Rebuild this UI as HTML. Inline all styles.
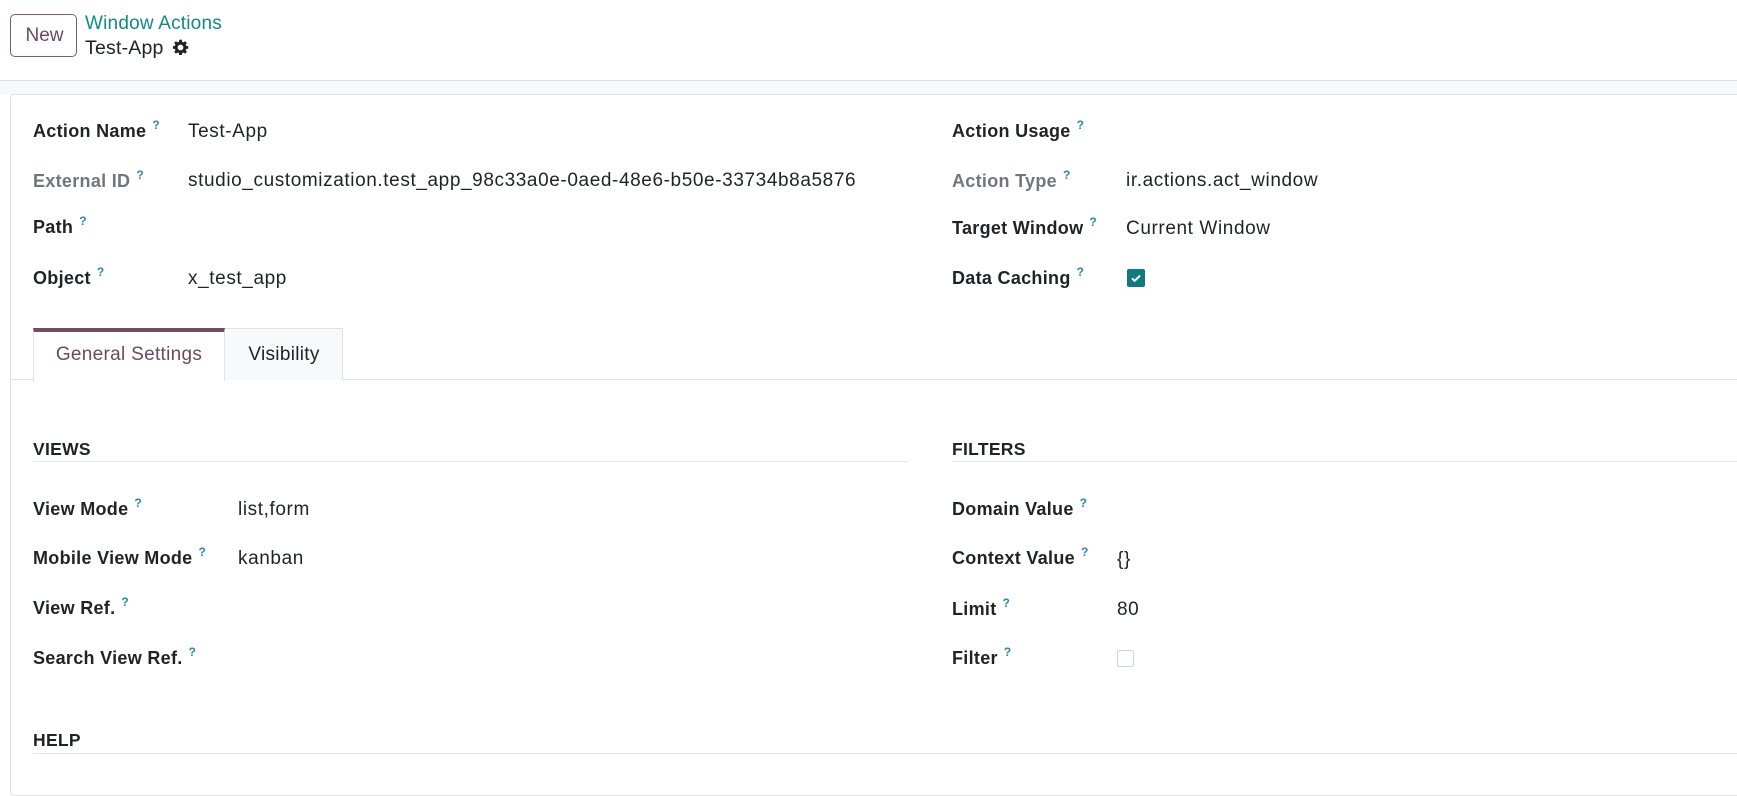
<!DOCTYPE html>
<html><head><meta charset="utf-8"><style>
body{margin:0;width:1737px;height:768px;overflow:hidden;background:#fff;font-family:"Liberation Sans",sans-serif;color:#1f2328;position:relative}
.a{position:absolute;white-space:nowrap;line-height:20px;font-size:19px;letter-spacing:0.6px}
.l,.g{font-weight:bold;font-size:18px;letter-spacing:0.3px}
.g{color:#707680}
.q{color:#2a8aa6;font-size:12px;position:relative;top:-8px;margin-left:6px;font-weight:bold}
.h{font-weight:bold;font-size:17.5px;letter-spacing:0.3px;color:#1f2328}
</style></head><body>
<div style="position:absolute;left:10px;top:14px;width:67px;height:43px;border:1.5px solid #7d5a6f;border-radius:5px;box-sizing:border-box"></div>
<div class="a" style="left:10px;top:26px;width:69px;text-align:center;color:#6b4a5f;font-size:19px;letter-spacing:0">New</div>
<div class="a" style="left:85px;top:14px;color:#128a87;font-size:19px;letter-spacing:0.2px">Window Actions</div>
<div class="a" style="left:85px;top:38px;font-size:19.5px;letter-spacing:0.2px">Test-App <svg width="17" height="17" viewBox="0 0 16 16" style="vertical-align:-2px;margin-left:3px"><path fill="#1f2328" d="M8 0.5l1.3.3.3 1.9 1.2.5 1.6-1.1 1.6 1.6-1.1 1.6.5 1.2 1.9.3v2.3l-1.9.3-.5 1.2 1.1 1.6-1.6 1.6-1.6-1.1-1.2.5-.3 1.9H6.8l-.3-1.9-1.2-.5-1.6 1.1-1.6-1.6 1.1-1.6-.5-1.2-1.9-.3V6.8l1.9-.3.5-1.2-1.1-1.6 1.6-1.6 1.6 1.1 1.2-.5.3-1.9zM8 5.3A2.7 2.7 0 1 0 8 10.7 2.7 2.7 0 1 0 8 5.3z"/></svg></div>
<div style="position:absolute;left:0;top:80px;width:1737px;height:14px;background:#f7f8f9;border-top:1.5px solid #dcdfe2"></div>
<div style="position:absolute;left:10px;top:94px;width:1740px;height:700px;border:1.5px solid #dee2e6;border-radius:4px;background:#fff"></div>

<div class="a l" style="left:33px;top:121px">Action Name<span class="q">?</span></div>
<div class="a" style="left:188px;top:122px">Test-App</div>
<div class="a g" style="left:33px;top:171px">External ID<span class="q">?</span></div>
<div class="a" style="left:188px;top:171px">studio_customization.test_app_98c33a0e-0aed-48e6-b50e-33734b8a5876</div>
<div class="a l" style="left:33px;top:217px">Path<span class="q">?</span></div>
<div class="a l" style="left:33px;top:268px">Object<span class="q">?</span></div>
<div class="a" style="left:188px;top:269px">x_test_app</div>

<div class="a l" style="left:952px;top:121px">Action Usage<span class="q">?</span></div>
<div class="a g" style="left:952px;top:171px">Action Type<span class="q">?</span></div>
<div class="a" style="left:1126px;top:171px">ir.actions.act_window</div>
<div class="a l" style="left:952px;top:218px">Target Window<span class="q">?</span></div>
<div class="a" style="left:1126px;top:219px">Current Window</div>
<div class="a l" style="left:952px;top:268px">Data Caching<span class="q">?</span></div>
<div style="position:absolute;left:1127px;top:269px;width:18px;height:18px;background:#117a7d;border-radius:2px"><svg width="18" height="18" viewBox="0 0 18 18"><path d="M5 9.3l2.6 2.5L13 6.6" stroke="#fff" stroke-width="2" fill="none"/></svg></div>

<div style="position:absolute;left:10px;top:379px;width:1740px;border-top:1.5px solid #dee2e6"></div>
<div style="position:absolute;left:33px;top:328px;width:192px;height:53px;background:#fff;border-left:1px solid #dee2e6;border-right:1px solid #dee2e6;border-top:4px solid #714b67;box-sizing:border-box"></div>
<div style="position:absolute;left:225px;top:328px;width:118px;height:52px;background:#f8f9fa;border:1px solid #dee2e6;border-bottom:none;border-left:none;box-sizing:border-box"></div>
<div class="a" style="left:33px;top:345px;width:192px;text-align:center;color:#6b4a5f;letter-spacing:0.3px">General Settings</div>
<div class="a" style="left:225px;top:345px;width:118px;text-align:center;letter-spacing:0.3px">Visibility</div>

<div class="a h" style="left:33px;top:439px">VIEWS</div>
<div style="position:absolute;left:33px;top:461px;width:875px;border-top:1.5px solid #e3e5e8"></div>
<div class="a h" style="left:952px;top:439px">FILTERS</div>
<div style="position:absolute;left:952px;top:461px;width:800px;border-top:1.5px solid #e3e5e8"></div>

<div class="a l" style="left:33px;top:499px">View Mode<span class="q">?</span></div>
<div class="a" style="left:238px;top:500px">list,form</div>
<div class="a l" style="left:33px;top:548px">Mobile View Mode<span class="q">?</span></div>
<div class="a" style="left:238px;top:549px">kanban</div>
<div class="a l" style="left:33px;top:598px">View Ref.<span class="q">?</span></div>
<div class="a l" style="left:33px;top:648px">Search View Ref.<span class="q">?</span></div>

<div class="a l" style="left:952px;top:499px">Domain Value<span class="q">?</span></div>
<div class="a l" style="left:952px;top:548px">Context Value<span class="q">?</span></div>
<div class="a" style="left:1117px;top:550px">{}</div>
<div class="a l" style="left:952px;top:599px">Limit<span class="q">?</span></div>
<div class="a" style="left:1117px;top:600px">80</div>
<div class="a l" style="left:952px;top:648px">Filter<span class="q">?</span></div>
<div style="position:absolute;left:1117px;top:650px;width:17px;height:17px;border:1px solid #ced4da;border-radius:2px;box-sizing:border-box"></div>

<div class="a h" style="left:33px;top:730px">HELP</div>
<div style="position:absolute;left:33px;top:753px;width:1720px;border-top:1.5px solid #e3e5e8"></div>
</body></html>
